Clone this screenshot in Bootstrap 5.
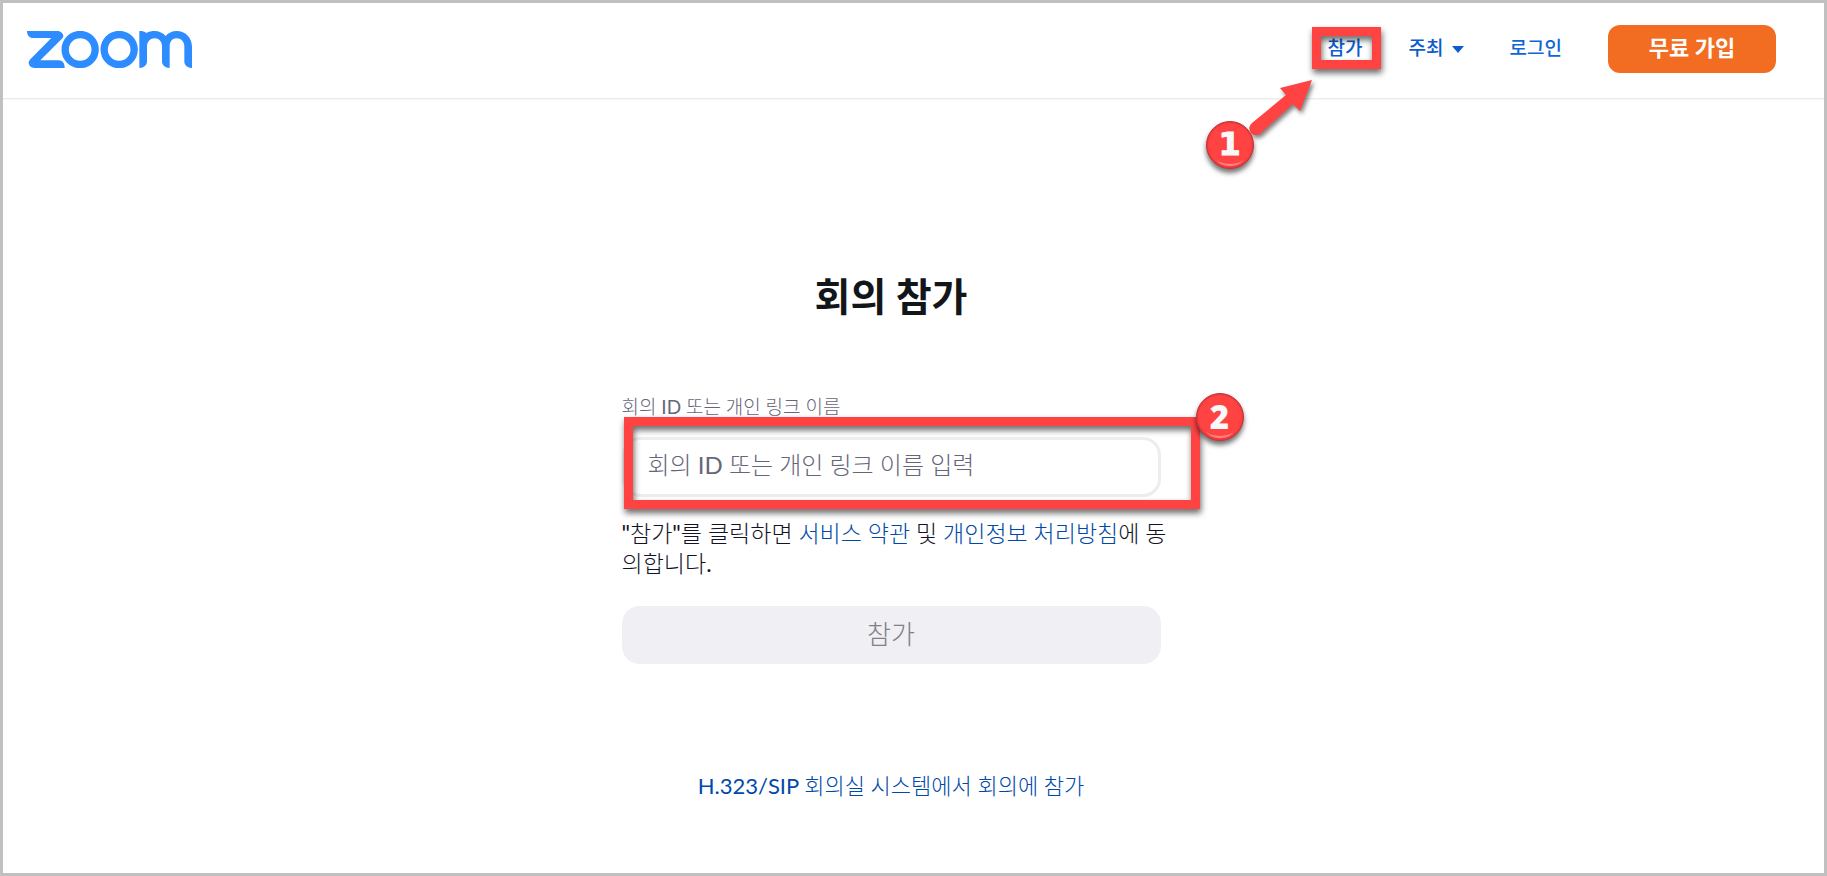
<!DOCTYPE html>
<html lang="ko">
<head>
<meta charset="utf-8">
<meta name="viewport" content="width=device-width, initial-scale=1">
<title>회의 참가 - Zoom</title>
<link href="https://cdn.jsdelivr.net/npm/bootstrap@5.3.0/dist/css/bootstrap.min.css" rel="stylesheet">
<style>
  body { font-family: Lato, "Noto Sans CJK KR Light", "Noto Sans CJK KR", sans-serif; font-size: 22px; line-height: 30px; color: #131325; }
  a { color: #0049a8; text-decoration: none; }
  .page-frame { border: 3px solid #c0c0c0; }
  .top-bar { border-bottom: 1px solid #ebebeb; padding: 22px 48px 25px 24px; box-shadow: 0 1px 0 #f7f7f7; }
  .brand-logo { width: 165px; height: 37px; }
  .top-links { gap: 46px; font-family: Lato, "Noto Sans CJK KR", sans-serif; font-size: 19px; font-weight: 500; line-height: 28px; }
  .top-links a { color: #0e66d8; padding-bottom: 3px; }
  .top-links .callout { padding-bottom: 3px; }
  .top-links .deep { color: #0b5cce; }
  .signup { width: 168px; height: 48px; border: 0; border-radius: 12px; background: #f26d21; color: #fff; font-size: 22px; font-weight: 700; padding: 0 0 2px; }
  .join-main { padding: 169px 45px 72px 0; }
  .join-title { font-family: Lato, "Noto Sans CJK KR", sans-serif; font-size: 39px; font-weight: 700; line-height: 56px; color: #131619; margin-bottom: 71px; }
  .join-form { width: 100%; max-width: 539px; margin-bottom: 107px; }
  .join-form label { font-size: 19px; line-height: 24px; color: #66667a; margin-bottom: 18px; }
  .meeting-id { height: 60px; border: 3px solid #ededed; border-radius: 18px; padding: 0 23px 6px; font-size: 24px; color: #232333; }
  .meeting-id::placeholder { color: #66667a; opacity: 1; }
  .terms { margin: 21px -12px 28px 0; word-break: break-all; font-size: 23px; }
  .join-btn { height: 58px; border: 0; border-radius: 18px; background: #efeff4; color: #808088; font-size: 26px; padding: 0 0 2px; }
  /* callouts drawn over the page */
  .callout { position: relative; }
  .callout-box { position: absolute; border: 9px solid #ff4343; filter: drop-shadow(1px 4px 3px rgba(0,0,0,.6)); pointer-events: none; }
  .callout-nav { inset: -7px -18px -4px -16px; }
  .callout-field { inset: -20px -39px -12px 2px; }
  .callout-arrow { position: absolute; top: 44px; left: -80px; filter: drop-shadow(2px 3px 2px rgba(0,0,0,.5)); pointer-events: none; }
  .step { position: absolute; width: 48px; height: 48px; border: 1px solid #c83238; border-radius: 50%; background: #ff4343; color: #f8f8f8; font-family: "Open Sans", sans-serif; font-size: 33px; font-weight: 800; line-height: 45px; text-align: center; box-shadow: 0 4px 5px rgba(0,0,0,.55), inset 0 0 2px #b8232c; }
  .step::after { content: ""; position: absolute; left: 10px; right: 10px; bottom: 2px; height: 14px; border-bottom: 2px solid #ff8585; border-radius: 50%; }
  .step-one { top: 87px; left: -122px; font-family: "DejaVu Sans", sans-serif; font-size: 32px; -webkit-text-stroke: 1px #f8f8f8; }
  .step-two { top: -44px; right: -83px; }
</style>
</head>
<body>
<div class="page-frame min-vh-100">
  <header class="top-bar d-flex align-items-center justify-content-between">
    <a href="#" aria-label="Zoom">
      <svg class="brand-logo d-block" viewBox="81 93 495 111" fill="#2d8cff" aria-hidden="true">
        <path d="M81 93H172C182 93 190 101 190 108C190 111 188 114 185 117L121 181H176C188 181 194 190 194 204H104C92 204 86 197 86 187Q87 182 91 178L154 114H100C88 114 81 106 81 93Z"/>
        <circle cx="240.500" cy="148.500" r="45" fill="none" stroke="#2d8cff" stroke-width="22"/>
        <circle cx="357.500" cy="148.500" r="45" fill="none" stroke="#2d8cff" stroke-width="22"/>
        <path d="M418 93C428 93 434 95 439 99C447 95 455 93 464 93C477 93 490 99 497 108C504 99 516 93 530 93C556 93 576 113 576 140V204C562 204 553 196 553 184V139C553 125 543 115 530 115S509 125 509 139V204C495 204 486 196 486 184V139C486 125 477 115 464 115S441 125 441 139V184C441 196 432 204 418 204Z"/>
      </svg>
    </a>
    <nav class="top-links d-flex align-items-center">
      <div class="callout">
        <a class="deep" href="#">참가</a>
        <div class="callout-box callout-nav"></div>
        <svg class="callout-arrow" width="70" height="60" viewBox="0 0 70 60" aria-hidden="true">
          <path d="M64 2L52 33L45 26L12 56Q7 59 3 55Q-1 49 4 45L38 17L32 10Z" fill="#ff4343"/>
        </svg>
        <span class="step step-one">1</span>
      </div>
      <a class="deep d-flex align-items-center" href="#">주최
        <svg class="ms-2 mt-1" width="12" height="7" viewBox="0 0 12 7" aria-hidden="true"><path d="M0 0H12L6 7Z" fill="#0b5cce"/></svg>
      </a>
      <a href="#">로그인</a>
      <button type="button" class="signup">무료 가입</button>
    </nav>
  </header>
  <main class="join-main d-flex flex-column align-items-center">
    <h1 class="join-title">회의 참가</h1>
    <form class="join-form">
      <label class="d-block" for="meeting">회의 ID 또는 개인 링크 이름</label>
      <div class="callout">
        <input id="meeting" type="text" class="meeting-id form-control" placeholder="회의 ID 또는 개인 링크 이름 입력">
        <div class="callout-box callout-field"></div>
        <span class="step step-two">2</span>
      </div>
      <p class="terms">"참가"를 클릭하면 <a href="#">서비스 약관</a> 및 <a href="#">개인정보 처리방침</a>에 동의합니다.</p>
      <button type="button" class="join-btn w-100" disabled>참가</button>
    </form>
    <a href="#">H.323/SIP 회의실 시스템에서 회의에 참가</a>
  </main>
</div>
<script src="https://cdn.jsdelivr.net/npm/bootstrap@5.3.0/dist/js/bootstrap.bundle.min.js"></script>
</body>
</html>
